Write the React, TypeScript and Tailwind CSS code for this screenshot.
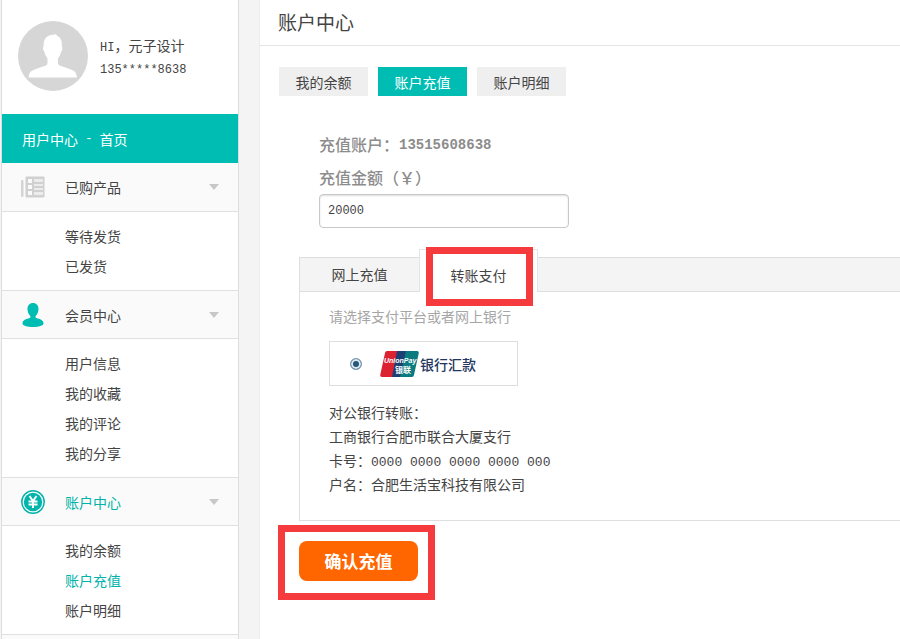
import React, { useState } from 'react';

interface MenuSection {
  title: string;
  icon: React.ReactNode;
  active?: boolean;
  items: string[];
}

const ORDERS_ICON = (
  <svg width="24" height="22" viewBox="0 0 24 22" fill="none">
    <rect x="0" y="4" width="2.500" height="17" rx="1" fill="#d4d4d4" />
    <rect x="4.500" y="0.500" width="19" height="21" rx="1" fill="#d0d0d0" />
    <path d="M7 3h4v4H7zM7 9h4v4H7zM7 15h4v4H7z" fill="#fafafa" />
    <path d="M13 3h9v3h-9zM13 8h9v2h-9zM13 12h9v2h-9zM13 16h9v3h-9z" fill="#ececec" />
  </svg>
);

const MEMBER_ICON = (
  <svg width="24" height="24" viewBox="0 0 24 24" fill="#00bdb4">
    <path d="M12 0c3.400 0 5.500 2.500 5.500 6 0 3-1.200 5.200-2.600 6.800-.6.800-.5 1.900.5 2.300 3.400 1.100 7.100 2 7.100 5.200 0 2.600-4.700 3.700-10.500 3.700S1.500 22.900 1.500 20.300c0-3.200 3.700-4.100 7.100-5.200 1-.4 1.100-1.500.5-2.300C7.700 11.200 6.500 9 6.500 6c0-3.500 2.100-6 5.500-6z" />
  </svg>
);

const ACCOUNT_ICON = (
  <svg width="24" height="24" viewBox="0 0 24 24" fill="none">
    <circle cx="12" cy="12" r="11.200" fill="#fafafa" stroke="#00b3aa" strokeWidth="1.500" />
    <circle cx="12" cy="12" r="9.200" fill="#00b5ac" />
    <path d="M8.500 6l3.500 5 3.500-5M7.500 11.500h9M7.500 14.500h9M12 11v7" stroke="#fff" strokeWidth="2" />
  </svg>
);

const SECTIONS: MenuSection[] = [
  { title: '已购产品', icon: ORDERS_ICON, items: ['等待发货', '已发货'] },
  { title: '会员中心', icon: MEMBER_ICON, items: ['用户信息', '我的收藏', '我的评论', '我的分享'] },
  { title: '账户中心', icon: ACCOUNT_ICON, active: true, items: ['我的余额', '账户充值', '账户明细'] },
];

const TABS = ['我的余额', '账户充值', '账户明细'];

const Avatar = () => (
  <svg width="70" height="70" viewBox="0 0 70 70" className="shrink-0">
    <circle cx="35" cy="35" r="35" fill="#d6d6d6" />
    <path
      d="M38 13c.3 1 .8 1.600 2 2.300 3 1.800 4.200 5 3.800 10.200 1 .3.800 4-.8 5.500-.5 2.800-1.600 4.700-3 6.500v4.500c0 1.500 1 2.300 3 3 5 1.800 10 3 13 5 1.800 1.300 2.500 3 3 6.500H10.500c.5-3.500 1.200-5.200 3-6.500 3-2 8-3.200 13-5 2-.7 3-1.500 3-3v-4.500c-1.400-1.800-2.500-3.700-3-6.500-1.600-1.500-1.800-5.200-.8-5.500-.4-7 2.300-10.500 7.300-11.500 1.800-.3 3.500-.3 5-1z"
      fill="#fff"
    />
  </svg>
);

const UnionPayLogo = () => (
  <svg width="39" height="26" viewBox="0 0 39 26" className="mr-px shrink-0">
    <path d="M7 0h12l-6 26H2c-1.500 0-2-1-1.700-2.500L5 2c.3-1.200 1-2 2-2z" fill="#dc2230" />
    <path d="M17 0h10l-6 26H12z" fill="#1c3f74" />
    <path d="M26 0h11c1.500 0 2 1 1.700 2.500L34 24c-.3 1.200-1 2-2 2H20z" fill="#0a7c80" />
    <text x="4" y="12" fill="#fff" fontSize="7" fontWeight="700" fontStyle="italic" fontFamily="Liberation Sans, sans-serif">
      UnionPay
    </text>
    <text x="15" y="22" fill="#fff" fontSize="8" fontWeight="700" fontFamily="Noto Sans CJK SC, sans-serif">
      银联
    </text>
  </svg>
);

const Sidebar = () => (
  <aside className="ml-px flex w-[238px] shrink-0 flex-col border-x border-[#dedede] bg-white">
    <div className="flex h-[114px] items-center gap-3 pb-[3px] pl-4">
      <Avatar />
      <div className="pt-1 leading-[25px]">
        <p>
          <span className="font-['Liberation_Mono',monospace] text-xs">HI</span>，元子设计
        </p>
        <p className="font-['Liberation_Mono',monospace] text-xs leading-[25px]">135*****8638</p>
      </div>
    </div>
    <a href="#home" className="flex h-[49px] items-center bg-[#00bdb4] pl-5 text-white">
      用户中心
      <span className="whitespace-pre font-['Liberation_Mono',monospace] text-xs"> - </span>
      首页
    </a>
    {SECTIONS.map((section, index) => (
      <section key={section.title}>
        <button
          type="button"
          className={`flex h-[49px] w-full items-center border-b border-[#e0e0e0] bg-[#fafafa] px-[19px] ${index > 0 ? 'border-t' : ''} ${section.active ? 'text-[#00b3aa]' : ''}`}
        >
          <span className="mr-5 flex w-6 justify-center">{section.icon}</span>
          {section.title}
          <svg width="10" height="6" viewBox="0 0 10 6" className="ml-auto" fill="#c8c8c8">
            <path d="M0 0h10L5 6z" />
          </svg>
        </button>
        <ul className="py-[9px] pl-[63px] leading-[30px]">
          {section.items.map(item => (
            <li key={item}>
              <a href="#item" className={item === '账户充值' ? 'text-[#00b3aa]' : ''}>{item}</a>
            </li>
          ))}
        </ul>
      </section>
    ))}
    <div className="flex-1 border-t border-[#e0e0e0] bg-[#fafafa]" />
  </aside>
);

const App: React.FC = () => {
  const [amount, setAmount] = useState('20000');
  const [tab, setTab] = useState('账户充值');

  return (
    <div className="flex min-h-screen bg-[#f4f4f4] font-['Noto_Sans_CJK_SC',sans-serif] text-sm text-[#444]">
      <Sidebar />
      <main className="ml-5 flex-1 border-l border-[#ececec] bg-white">
        <h1 className="flex h-[46px] items-center border-b border-[#e4e4e4] pb-[2px] pl-[18px] text-[19px]">账户中心</h1>

        <nav className="flex gap-[10px] pl-[19px] pt-[21px]">
          {TABS.map(name => (
            <button
              key={name}
              type="button"
              onClick={() => setTab(name)}
              className={`h-[29px] w-[89px] ${tab === name ? 'bg-[#00bdb4] text-white' : 'bg-[#efefef]'}`}
            >
              {name}
            </button>
          ))}
        </nav>

        <form className="pt-8" onSubmit={e => e.preventDefault()}>
          <div className="flex flex-col items-start pl-[59px] text-[#8c8c8c]">
            <p className="flex items-center text-base font-medium leading-[33px]">
              充值账户：
              <span className="font-['Liberation_Mono',monospace] text-sm font-bold">13515608638</span>
            </p>
            <label htmlFor="amount" className="text-base font-medium leading-[33px]">充值金额（￥）</label>
            <input
              id="amount"
              type="text"
              value={amount}
              onChange={e => setAmount(e.target.value)}
              className="h-[34px] w-[250px] rounded-sm border border-[#c8c8c8] bg-white px-2 font-['Liberation_Mono',monospace] text-xs text-[#444] shadow-[inset_0_1px_2px_#ddd] outline-none"
            />
          </div>

          <div className="ml-[39px] mt-[29px] border-b border-l border-[#dedede]">
            <div className="flex h-[35px] items-end border-y border-[#dedede] bg-[#f4f4f4]">
              <button type="button" className="h-[34px] w-[119px]">网上充值</button>
              <div className="relative -mb-px">
                <button type="button" className="h-[43px] w-[119px] border-x border-t border-[#e4e4e4] bg-white pt-2">转账支付</button>
                {/* highlight frame over the active tab */}
                <div className="pointer-events-none absolute -bottom-[14px] left-[7px] h-[59px] w-[107px] border-[7px] border-[#f53b3d]" />
              </div>
            </div>

            <div className="pb-6 pl-[29px] pt-3">
              <p className="leading-6 text-[#a6a6a6]">请选择支付平台或者网上银行</p>
              <label className="mt-[13px] flex h-[45px] w-[189px] items-center border border-[#dedede] pl-5">
                <input
                  type="radio"
                  name="bank"
                  defaultChecked
                  className="mr-[18px] size-3 appearance-none rounded-full border border-[#7f9bb0] bg-[#23587c] shadow-[inset_0_0_0_2px_#dce8ee]"
                />
                <UnionPayLogo />
                <span className="font-medium text-[#24365f]">银行汇款</span>
              </label>
              <div className="mt-[14px] leading-6">
                <p className="h-6">对公银行转账：</p>
                <p className="h-6">工商银行合肥市联合大厦支行</p>
                <p className="h-6">
                  卡号：<span className="font-['Liberation_Mono',monospace] text-[13px] leading-4">0000 0000 0000 0000 000</span>
                </p>
                <p className="h-6">户名：合肥生活宝科技有限公司</p>
              </div>
            </div>
          </div>

          <div className="ml-[18px] mt-1 inline-flex border-[7px] border-[#f53b3d] pb-3 pl-[14px] pr-[10px] pt-[9px]">
            <button type="submit" className="h-10 w-[119px] rounded-lg bg-[#ff6600] text-[17px] font-bold text-white">
              确认充值
            </button>
          </div>
        </form>
      </main>
    </div>
  );
};

export default App;
